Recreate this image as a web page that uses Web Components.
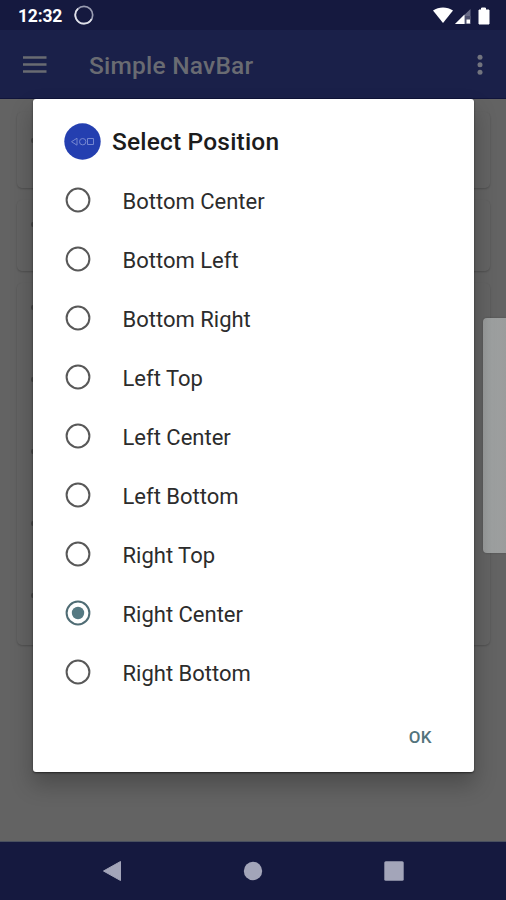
<!DOCTYPE html>
<html lang="en">
<head>
<meta charset="utf-8">
<title>Simple NavBar</title>
<style>
  html, body { margin: 0; height: 100%; overflow: hidden; }
  body { font-family: Roboto, "Liberation Sans", sans-serif; background: #636363; }
</style>
</head>
<body>
<phone-screen>
  <status-bar slot="top">12:32</status-bar>
  <app-bar slot="top">Simple NavBar</app-bar>
  <settings-card slot="page" rows="1" style="height:76px"></settings-card>
  <settings-card slot="page" rows="1" style="height:71px"></settings-card>
  <settings-card slot="page" rows="5" style="height:362px"></settings-card>
  <edge-handle slot="overlay"></edge-handle>
  <position-dialog slot="overlay">
    <span slot="title">Select Position</span>
    <radio-option>Bottom Center</radio-option>
    <radio-option>Bottom Left</radio-option>
    <radio-option>Bottom Right</radio-option>
    <radio-option>Left Top</radio-option>
    <radio-option>Left Center</radio-option>
    <radio-option>Left Bottom</radio-option>
    <radio-option>Right Top</radio-option>
    <radio-option checked>Right Center</radio-option>
    <radio-option>Right Bottom</radio-option>
    <span slot="action">OK</span>
  </position-dialog>
  <system-nav slot="bottom"></system-nav>
</phone-screen>
<script>
const define = (name, html) => customElements.define(name, class extends HTMLElement {
  constructor() {
    super();
    this.attachShadow({ mode: 'open' }).innerHTML = html;
  }
});

define('phone-screen', `
<style>
  :host { display: flex; flex-direction: column; position: relative; width: 506px; height: 900px; overflow: hidden; background: #636363; }
  main { flex: 1; min-height: 0; box-sizing: border-box; padding: 13px 16px 0 17px; display: flex; flex-direction: column; gap: 12px; }
</style>
<slot name="top"></slot>
<main><slot name="page"></slot></main>
<slot name="bottom"></slot>
<slot name="overlay"></slot>`);

define('status-bar', `
<style>
  :host { display: flex; align-items: center; box-sizing: border-box; height: 30px; padding: 1px 16px 0 18px; background: #15193f; color: #fff; font-size: 17.5px; line-height: 30px; font-weight: 700; letter-spacing: -.2px; }
  .ring { margin: -1px 0 0 12px; }
  .right { margin-left: auto; }
  svg { display: block; }
</style>
<slot></slot>
<svg class="ring" width="20" height="20" viewBox="0 0 20 20" fill="none" stroke-width="1.7"><circle cx="10" cy="10" r="8.7" stroke="#9a9db2"/><path d="M4 3.7A8.7 8.7 0 0 0 10 18.7A8.7 8.7 0 0 0 17.6 14.2" stroke="#dfe0e8"/></svg>
<svg class="right" width="57" height="18" viewBox="0 0 57 18">
  <path d="M0 3.400C5.800-.6 14.200-.6 20 3.400L10 16Z" fill="#fff"/>
  <path d="M22 17L37.500 2V17Z" fill="#696c87"/>
  <path d="M22 17L31.500 7.500V17Z" fill="#fff"/>
  <path d="M32 9H38V17H32Z" fill="#4c4f6d"/><path d="M33.500 12.500H37V16.500H33.500Z" fill="#fff"/>
  <path d="M48.500 1H52.500V3H56V17H46V3H48.500Z" fill="#fff" stroke="#fff" stroke-linejoin="round"/>
</svg>`);

define('app-bar', `
<style>
  :host { display: flex; align-items: center; box-sizing: border-box; height: 69px; padding: 2px 20px 0 23px; background: #1a2049; color: #696b72; font-size: 24.5px; line-height: 30px; font-weight: 500; letter-spacing: .22px; border-bottom: 1px solid #10143a; }
  .title { margin: 2px 0 0 42px; white-space: nowrap; }
  .more { margin-left: auto; }
  svg { display: block; flex: none; }
</style>
<svg width="24" height="18" viewBox="0 0 24 18" fill="#696b72"><path d="M0 1H23.500V3.500H0ZM0 8H23.500V10.500H0ZM0 15H23.500V17.500H0Z" transform="translate(0 -.8)"/></svg>
<span class="title"><slot></slot></span>
<svg class="more" width="12" height="22" viewBox="0 0 12 22" fill="#72747e"><circle cx="6" cy="3.200" r="2.500"/><circle cx="6" cy="10.700" r="2.500"/><circle cx="6" cy="18.200" r="2.500"/></svg>`);

customElements.define('settings-card', class extends HTMLElement {
  constructor() {
    super();
    const rows = Number(this.getAttribute('rows'));
    this.attachShadow({ mode: 'open' }).innerHTML = `
<style>
  :host { display: flex; flex-direction: column; gap: 67px; box-sizing: border-box; flex: none; padding: 22px 0 0 14px; border-radius: 5px; background: #636363; box-shadow: 0 1px 2px rgba(0,0,0,.2); }
  :host(:first-of-type) { padding-top: 26px; }
  i { width: 4px; height: 5px; border-radius: 2px; background: #484848; }
</style>` + '<i></i>'.repeat(rows);
  }
});

define('edge-handle', `
<style>
  :host { display: block; position: absolute; right: 0; top: 318px; width: 23px; height: 235px; border-radius: 4px 0 0 4px; background: linear-gradient(90deg, #999b9b, #9da0a0 40%, #9a9c9c); box-shadow: 0 0 2px rgba(0,0,0,.25); }
</style>`);

define('position-dialog', `
<style>
  :host { display: flex; flex-direction: column; position: absolute; left: 33px; top: 99px; width: 441px; height: 673px; box-sizing: border-box; background: #fff; border-radius: 3px; box-shadow: 0 1px 2px rgba(0,0,0,.55), 0 12px 22px 1px rgba(0,0,0,.24); }
  header { display: flex; align-items: center; box-sizing: border-box; height: 72px; padding: 12px 0 0 31px; gap: 11px; color: #1c1c1c; font-size: 24.5px; font-weight: 500; letter-spacing: .18px; white-space: nowrap; }
  svg { display: block; }
  footer { margin-top: auto; padding: 0 42px 23px 0; text-align: right; font-size: 17px; line-height: 24px; font-weight: 500; color: #53747c; letter-spacing: .4px; }
</style>
<header>
  <svg width="37" height="37" viewBox="0 0 37 37"><circle cx="18.500" cy="18.500" r="18.200" fill="#243fb0"/><g fill="none" stroke="#7587d0" stroke-width="1"><path d="M13 15.200V22.200L7.500 18.700Z"/><circle cx="18.700" cy="18.700" r="3.200"/><path d="M23.500 15.500H29.500V21.500H23.500Z"/></g></svg>
  <slot name="title"></slot>
</header>
<slot></slot>
<footer><slot name="action"></slot></footer>`);

define('radio-option', `
<style>
  :host { display: flex; align-items: center; height: 59.060px; padding-left: 32px; gap: 31.500px; color: #2c2c2c; font-size: 22px; line-height: 30px; white-space: nowrap; }
  svg { display: block; flex: none; margin-bottom: 1px; }
  span { padding-top: 2px; }
  .ring { stroke: #585858; }
  .dot { fill: none; }
  :host([checked]) .ring { stroke: #4f6c74; }
  :host([checked]) .dot { fill: #557982; }
</style>
<svg width="26" height="26" viewBox="0 0 26 26"><circle class="ring" cx="13" cy="13" r="11.400" fill="none" stroke-width="2"/><circle class="dot" cx="13" cy="13" r="6.200"/></svg>
<span><slot></slot></span>`);

define('system-nav', `
<style>
  :host { display: flex; justify-content: space-between; align-items: center; box-sizing: border-box; height: 59px; padding: 1px 102px; background: #15193f; border-top: 1px solid #49505f; }
  svg { display: block; }
</style>
<svg width="20" height="22" viewBox="0 0 20 22"><path d="M18.500 1.500V20.500L1.500 11Z" fill="#a3a5b9" stroke="#a3a5b9" stroke-linejoin="round"/></svg>
<svg width="20" height="20" viewBox="0 0 20 20"><circle cx="10" cy="10" r="9.200" fill="#a3a5b9"/></svg>
<svg width="20" height="20" viewBox="0 0 20 20"><rect x=".3" y=".3" width="19.400" height="19.400" rx="1.500" fill="#a3a5b9"/></svg>`);
</script>
</body>
</html>
